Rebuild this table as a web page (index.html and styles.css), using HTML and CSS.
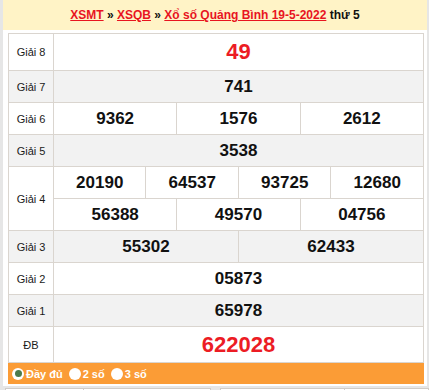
FILE: index.html
```html
<!DOCTYPE html>
<html lang="vi">
<head>
<meta charset="utf-8">
<title>XSQB 19-5-2022</title>
<link rel="stylesheet" href="styles.css">
</head>
<body>
<div class="box">
  <div class="head">
    <a href="#">XSMT</a> » <a href="#">XSQB</a> » <a href="#">Xổ số Quảng Bình 19-5-2022</a> thứ 5
  </div>
  <table class="kq">
    <colgroup>
      <col class="c-lbl">
      <col><col><col><col><col><col><col><col><col><col><col><col>
    </colgroup>
    <tr class="r8">
      <td class="lbl">Giải 8</td>
      <td colspan="12" class="big">49</td>
    </tr>
    <tr class="alt">
      <td class="lbl">Giải 7</td>
      <td colspan="12">741</td>
    </tr>
    <tr>
      <td class="lbl">Giải 6</td>
      <td colspan="4">9362</td>
      <td colspan="4">1576</td>
      <td colspan="4">2612</td>
    </tr>
    <tr class="alt">
      <td class="lbl">Giải 5</td>
      <td colspan="12">3538</td>
    </tr>
    <tr>
      <td class="lbl" rowspan="2">Giải 4</td>
      <td colspan="3">20190</td>
      <td colspan="3">64537</td>
      <td colspan="3">93725</td>
      <td colspan="3">12680</td>
    </tr>
    <tr>
      <td colspan="4">56388</td>
      <td colspan="4">49570</td>
      <td colspan="4">04756</td>
    </tr>
    <tr class="alt">
      <td class="lbl">Giải 3</td>
      <td colspan="6">55302</td>
      <td colspan="6">62433</td>
    </tr>
    <tr>
      <td class="lbl">Giải 2</td>
      <td colspan="12">05873</td>
    </tr>
    <tr class="alt">
      <td class="lbl">Giải 1</td>
      <td colspan="12">65978</td>
    </tr>
    <tr class="rdb">
      <td class="lbl">ĐB</td>
      <td colspan="12" class="big">622028</td>
    </tr>
  </table>
  <div class="opts">
    <label class="opt"><span class="dot on"></span>Đầy đủ</label>
    <label class="opt"><span class="dot"></span>2 số</label>
    <label class="opt"><span class="dot"></span>3 số</label>
  </div>
</div>
<div class="next">
  <div class="nbox nb1"><div class="ncell n1"></div><div class="ncell"></div></div>
  <div class="nbox nb2"><div class="ncell n2"></div><div class="ncell"></div></div>
</div>
</body>
</html>
```
FILE: styles.css
```css
html, body {
  margin: 0;
  padding: 0;
}
body {
  background: #e6e6e6;
  font-family: "Liberation Sans", Arial, sans-serif;
  color: #111;
  width: 429px;
  height: 390px;
  overflow: hidden;
}
.box {
  margin-left: 3px;
  width: 424px;
  background: #fff;
  padding-bottom: 2px;
}
.head {
  height: 30px;
  line-height: 30px;
  background: #fff3c6;
  text-align: center;
  font-size: 12px;
  font-weight: bold;
  color: #111;
  margin-bottom: 3px;
}
.head a {
  color: #e8141f;
  text-decoration: underline;
}
.kq {
  margin-left: 5px;
  width: 416px;
  border-collapse: collapse;
  table-layout: fixed;
}
.c-lbl {
  width: 45px;
}
.kq td {
  border: 1px solid #dad5cf;
  text-align: center;
  vertical-align: middle;
  padding: 0;
  height: 31px;
  font-size: 17px;
  font-weight: bold;
  color: #111;
}
.kq tr.alt td {
  background: #f2f2f2;
}
.kq td.lbl {
  font-size: 11px;
  font-weight: normal;
  color: #1a1a1a;
}
.kq tr.r8 td {
  height: 36px;
}
.kq tr.rdb td {
  height: 35px;
}
.kq td.big {
  color: #ec1c24;
  font-size: 22px;
}
.opts {
  margin-left: 5px;
  width: 412px;
  height: 21px;
  background: #fb9c36;
  display: flex;
  align-items: center;
  padding-left: 4px;
  gap: 6px;
}
.opt {
  display: flex;
  align-items: center;
  gap: 2px;
  color: #fff;
  font-size: 11px;
  font-weight: bold;
}
.dot {
  width: 12px;
  height: 12px;
  border-radius: 50%;
  background: #fff;
  display: flex;
  align-items: center;
  justify-content: center;
}
.dot.on::after {
  content: "";
  width: 7px;
  height: 7px;
  border-radius: 50%;
  background: #4b7a4c;
}
.next {
  display: flex;
  margin-top: 2px;
  gap: 9px;
  padding-left: 5px;
}
.nbox {
  background: #fff;
  border: 1px solid #d0ccc8;
  height: 20px;
  display: flex;
}
.nb1 {
  width: 204px;
}
.nb2 {
  width: 207px;
}
.ncell {
  flex: 1;
}
.n1 {
  flex: 0 0 77px;
  border-right: 1px solid #d0ccc8;
}
.n2 {
  flex: 0 0 123px;
  border-right: 1px solid #d0ccc8;
}
```
